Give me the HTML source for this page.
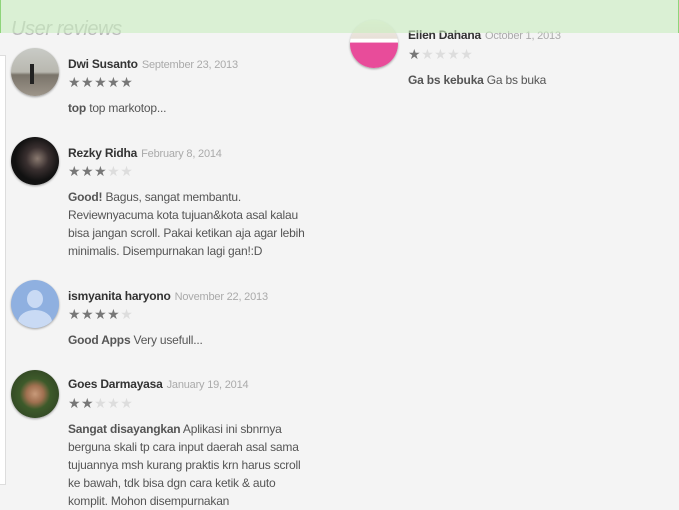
<!DOCTYPE html>
<html><head><style>
body{margin:0;width:679px;height:500px;overflow:hidden;background:#f4f4f4;font-family:"Liberation Sans",sans-serif;position:relative}
.a{position:absolute}
.av{position:absolute;width:48px;height:48px;border-radius:50%;box-shadow:0 1px 2px rgba(0,0,0,.35);overflow:hidden}
.nm{position:absolute;font-size:12px;font-weight:bold;color:#333;white-space:nowrap;letter-spacing:-0.2px}
.nm span{font-weight:normal;color:#aaa;font-size:11px;margin-left:4px}
.st{position:absolute;font-size:14px;letter-spacing:0.5px;color:#777;line-height:12px}
.st i{font-style:normal;color:#ddd}
.tx{position:absolute;font-size:12px;line-height:18px;color:#555;white-space:nowrap;letter-spacing:-0.2px}
.tx b{color:#555}
</style></head><body>
<div class="a" style="left:0;top:55px;width:5px;height:428px;background:#fff;border:1px solid #ddd;border-left:none"></div>
<div class="a" style="left:11px;top:18px;font-size:20px;font-style:italic;color:#bbb;font-weight:300;letter-spacing:-0.4px">User reviews</div>

<div class="av" style="left:11px;top:48px;background:linear-gradient(#c9cbc6 0%,#b9b8b0 50%,#7a746a 56%,#9d958a 100%)"><div class="a" style="left:19px;top:16px;width:4px;height:20px;background:#222"></div></div>
<div class="nm" style="left:68px;top:57px">Dwi Susanto<span>September 23, 2013</span></div>
<div class="st" style="left:68px;top:76px">★★★★★</div>
<div class="tx" style="left:68px;top:99px"><b>top</b> top markotop...</div>

<div class="av" style="left:11px;top:137px;background:radial-gradient(circle at 55% 45%,#8a7a70 0,#3a3030 30%,#111 60%)"></div>
<div class="nm" style="left:68px;top:146px">Rezky Ridha<span>February 8, 2014</span></div>
<div class="st" style="left:68px;top:165px">★★★<i>★★</i></div>
<div class="tx" style="left:68px;top:188px"><b>Good!</b> Bagus, sangat membantu.<br>Reviewnyacuma kota tujuan&amp;kota asal kalau<br>bisa jangan scroll. Pakai ketikan aja agar lebih<br>minimalis. Disempurnakan lagi gan!:D</div>

<div class="av" style="left:11px;top:280px;background:#8fb0e0"><div class="a" style="left:16px;top:10px;width:16px;height:18px;border-radius:50%;background:#c9daf4"></div><div class="a" style="left:7px;top:30px;width:34px;height:24px;border-radius:50% 50% 0 0;background:#c9daf4"></div></div>
<div class="nm" style="left:68px;top:289px">ismyanita haryono<span>November 22, 2013</span></div>
<div class="st" style="left:68px;top:308px">★★★★<i>★</i></div>
<div class="tx" style="left:68px;top:331px"><b>Good Apps</b> Very usefull...</div>

<div class="av" style="left:11px;top:370px;background:radial-gradient(circle at 50% 50%,#c89a7a 0,#a07050 25%,#3d5a2a 45%,#2a3a20 100%)"></div>
<div class="nm" style="left:68px;top:377px">Goes Darmayasa<span>January 19, 2014</span></div>
<div class="st" style="left:68px;top:397px">★★<i>★★★</i></div>
<div class="tx" style="left:68px;top:420px"><b>Sangat disayangkan</b> Aplikasi ini sbnrnya<br>berguna skali tp cara input daerah asal sama<br>tujuannya msh kurang praktis krn harus scroll<br>ke bawah, tdk bisa dgn cara ketik &amp; auto<br>komplit. Mohon disempurnakan</div>

<div class="av" style="left:350px;top:20px;background:linear-gradient(#eef0e4 0%,#e8e0d8 38%,#fff 40%,#fff 46%,#e84c9a 48%,#e84c9a 100%)"></div>
<div class="nm" style="left:408px;top:28px">Ellen Dahana<span>October 1, 2013</span></div>
<div class="st" style="left:408px;top:48px">★<i>★★★★</i></div>
<div class="tx" style="left:408px;top:71px"><b>Ga bs kebuka</b> Ga bs buka</div>

<div class="a" style="left:0;top:0;width:679px;height:33px;background:rgba(200,236,190,.6);box-sizing:border-box;border-left:1px solid #8ed47a;border-right:1px solid #8ed47a"></div>
</body></html>
